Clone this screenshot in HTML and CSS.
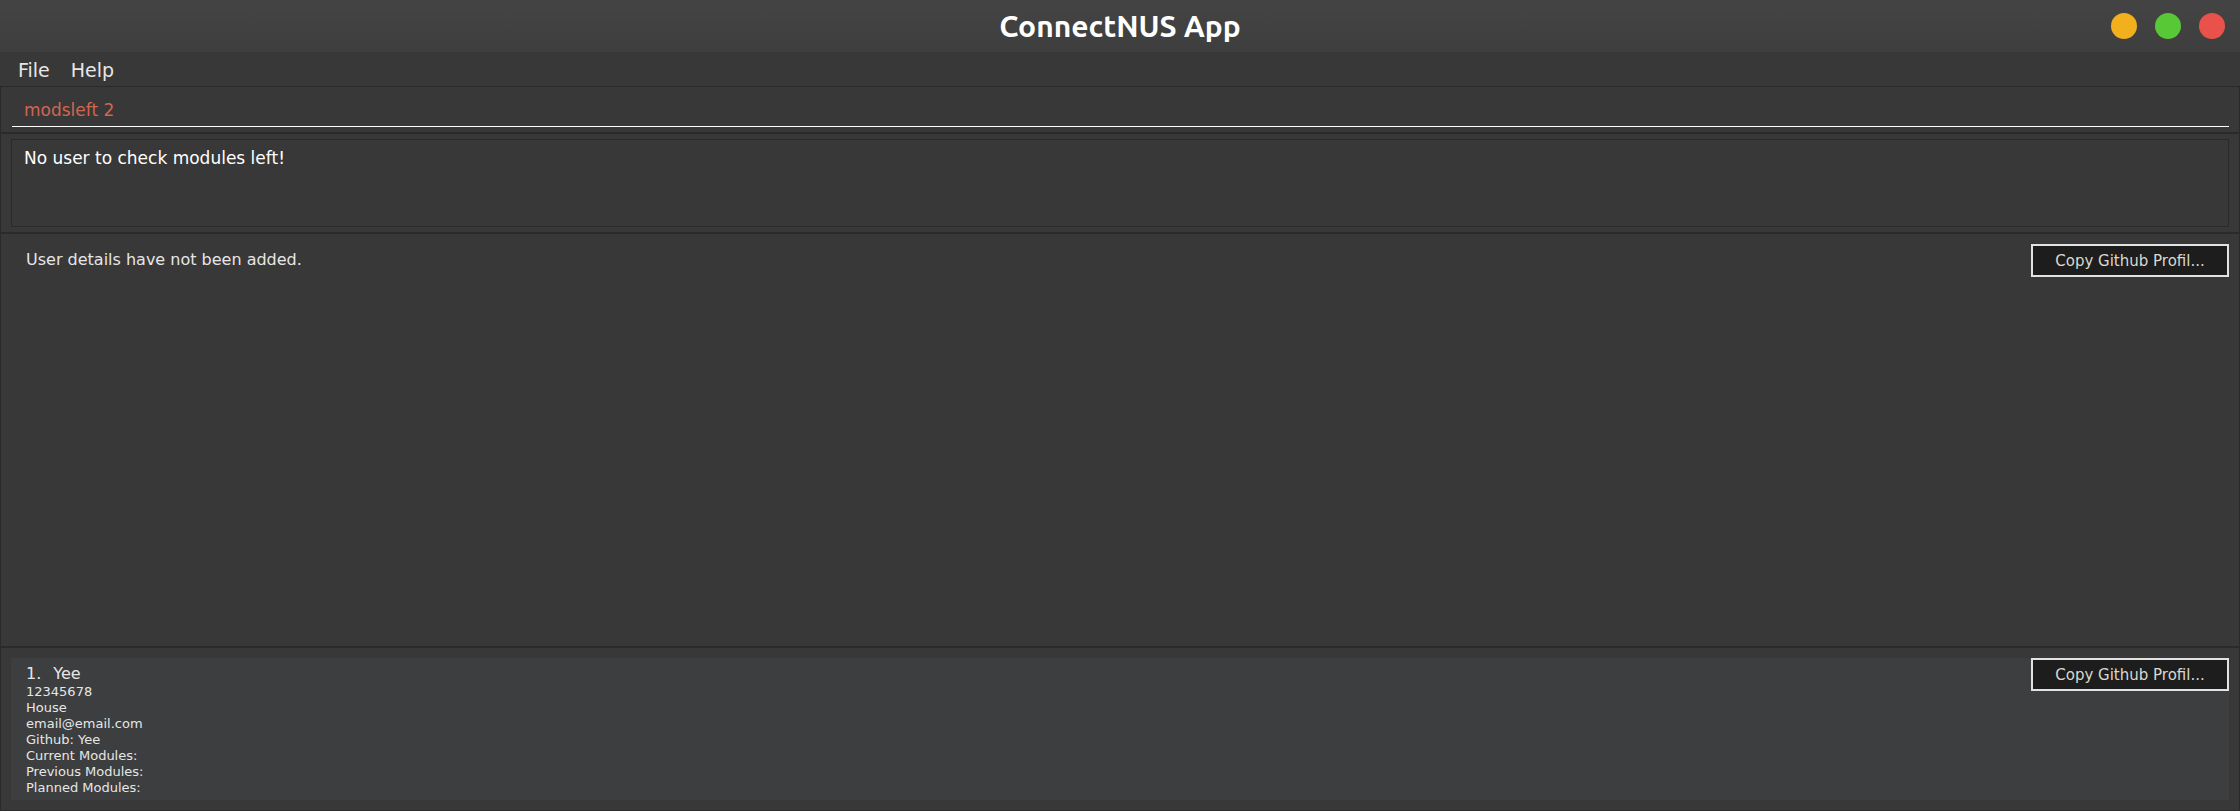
FILE: index.html
```html
<!DOCTYPE html>
<html lang="en">
<head>
<meta charset="utf-8">
<title>ConnectNUS App</title>
<link rel="stylesheet" href="styles.css">
</head>
<body>
<header class="titlebar">
  <h1 class="title">ConnectNUS App</h1>
  <div class="controls">
    <button class="dot minimize" aria-label="Minimize"></button>
    <button class="dot maximize" aria-label="Maximize"></button>
    <button class="dot close" aria-label="Close"></button>
  </div>
</header>
<nav class="menubar" aria-label="Main menu">
  <button class="menu">File</button>
  <button class="menu">Help</button>
</nav>
<main class="content">
  <section class="pane command-pane">
    <input class="command" type="text" aria-label="Command" value="modsleft 2" spellcheck="false">
  </section>
  <section class="pane result-pane">
    <textarea class="result" aria-label="Result" readonly>No user to check modules left!</textarea>
  </section>
  <section class="pane user-pane">
    <div class="card">
      <p class="name">User details have not been added.</p>
      <button class="copy">Copy Github Profil...</button>
    </div>
  </section>
  <section class="pane list-pane">
    <article class="card person">
      <div class="details">
        <h2 class="name"><span>1.</span><span>Yee</span></h2>
        <p>12345678</p>
        <p>House</p>
        <p>email@email.com</p>
        <p>Github: Yee</p>
        <p>Current Modules:</p>
        <p>Previous Modules:</p>
        <p>Planned Modules:</p>
      </div>
      <button class="copy">Copy Github Profil...</button>
    </article>
  </section>
</main>
</body>
</html>
```
FILE: styles.css
```css
* {
  box-sizing: border-box;
}

body {
  display: flex;
  flex-direction: column;
  min-height: 100vh;
  margin: 0;
  background: #383838;
  color: #e6e6e6;
  font-family: "DejaVu Sans", sans-serif;
}

h1, h2, p {
  margin: 0;
  font-weight: normal;
}

button, input, textarea {
  margin: 0;
  border: 0;
  padding: 0;
  border-radius: 0;
  background: none;
  color: inherit;
  font-family: inherit;
  outline: none;
}

.titlebar {
  display: grid;
  grid-template-columns: 1fr auto 1fr;
  align-items: center;
  height: 52px;
  padding: 0 15px;
  background: linear-gradient(#444444, #3e3e3e);
}

.title {
  grid-column: 2;
  color: #ffffff;
  font-family: Ubuntu, "Noto Sans", sans-serif;
  font-size: 30px;
  font-weight: bold;
  line-height: 36px;
}

.controls {
  display: flex;
  gap: 18px;
  justify-content: flex-end;
}

.dot {
  width: 26px;
  height: 26px;
  border-radius: 50%;
}

.minimize { background: #f2b01d; }
.maximize { background: #59c837; }
.close { background: #e9524a; }

.menubar {
  display: flex;
  gap: 21px;
  height: 34px;
  padding: 0 18px;
  background: #383838;
}

.menu {
  padding-top: 2px;
  font-size: 19px;
  line-height: 32px;
}

.content {
  flex: 1;
  display: flex;
  flex-direction: column;
}

.pane {
  border: 1px solid #2a2a2a;
  padding: 10px;
}

.command-pane {
  padding: 5px 10px 5px 11px;
}

.command {
  display: block;
  width: 100%;
  height: 35px;
  padding: 2px 12px 0;
  border-bottom: 1px solid #ffffff;
  color: #d06651;
  font-size: 17px;
}

.result-pane {
  padding: 5px 10px;
}

.result {
  display: block;
  width: 100%;
  height: 88px;
  padding: 6px 12px;
  border: 1px solid #2a2a2a;
  color: #ffffff;
  font-size: 17px;
  line-height: 24px;
  resize: none;
}

.user-pane {
  flex: 1;
}

.card {
  display: flex;
  align-items: flex-start;
  justify-content: space-between;
  padding-left: 15px;
}

.user-pane .name {
  padding-top: 6px;
}

.person {
  background: #3c3e3f;
}

.details {
  padding: 6px 0 4px;
  font-size: 13px;
  line-height: 16px;
}

.name {
  font-size: 16px;
  line-height: 20px;
}

.person .name {
  display: flex;
  gap: 12px;
}

.copy {
  width: 198px;
  height: 33px;
  border: 2px solid #e2e2e2;
  background: #1d1d1d;
  color: #d8d8d0;
  font-size: 15px;
}
```
